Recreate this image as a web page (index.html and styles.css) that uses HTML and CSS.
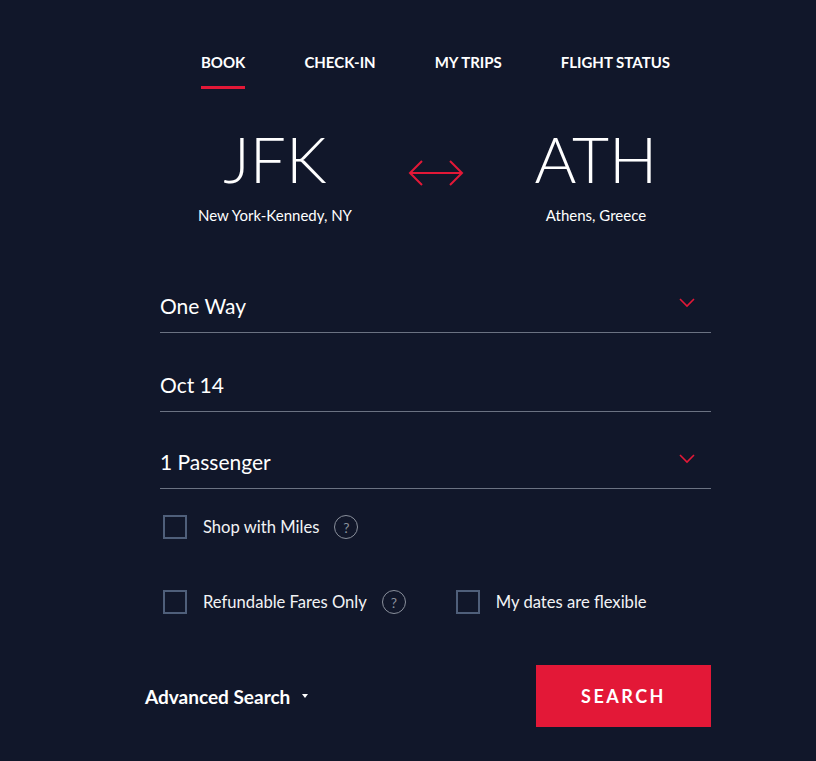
FILE: index.html
```html
<!DOCTYPE html>
<html>
<head>
<meta charset="utf-8">
<link rel="stylesheet" href="styles.css">
</head>
<body>
<div class="page">
  <nav class="tabs">
    <a class="tab active">BOOK</a>
    <a class="tab">CHECK-IN</a>
    <a class="tab">MY TRIPS</a>
    <a class="tab">FLIGHT STATUS</a>
  </nav>

  <div class="route">
    <div class="airport">
      <div class="code">JFK</div>
      <div class="city">New York-Kennedy, NY</div>
    </div>
    <div class="swap">
      <svg width="56" height="28" viewBox="0 0 56 28"><path d="M2 14 H54 M14 2 L2 14 L14 26 M42 2 L54 14 L42 26" fill="none" stroke="#e31837" stroke-width="2"/></svg>
    </div>
    <div class="airport">
      <div class="code">ATH</div>
      <div class="city">Athens, Greece</div>
    </div>
  </div>

  <div class="field f1">
    <span>One Way</span>
    <svg class="chev" width="16" height="10" viewBox="0 0 16 10"><path d="M1 1 L8 8 L15 1" fill="none" stroke="#e31837" stroke-width="1.6"/></svg>
  </div>
  <div class="field f2">
    <span>Oct 14</span>
  </div>
  <div class="field f3">
    <span>1 Passenger</span>
    <svg class="chev" width="16" height="10" viewBox="0 0 16 10"><path d="M1 1 L8 8 L15 1" fill="none" stroke="#e31837" stroke-width="1.6"/></svg>
  </div>

  <div class="checks r1">
    <label class="check"><span class="box"></span><span class="lbl">Shop with Miles</span><span class="help">?</span></label>
  </div>
  <div class="checks r2">
    <label class="check"><span class="box"></span><span class="lbl">Refundable Fares Only</span><span class="help">?</span></label>
    <label class="check"><span class="box"></span><span class="lbl">My dates are flexible</span></label>
  </div>

  <div class="actions">
    <a class="advanced">Advanced Search <span class="tri"></span></a>
    <button class="search">SEARCH</button>
  </div>
</div>
</body>
</html>
```

FILE: styles.css
```css
html, body {
  margin: 0;
  padding: 0;
  background: #11172a;
  height: 100%;
}
body {
  font-family: Lato, "Open Sans", sans-serif;
  color: #ffffff;
}
.page {
  width: 551px;
  margin-left: 160px;
}
.tabs {
  display: flex;
  justify-content: center;
  gap: 59px;
  padding-top: 52px;
}
.tab {
  font-weight: 700;
  font-size: 15px;
  line-height: 20px;
  padding-bottom: 14px;
  border-bottom: 3px solid transparent;
  color: #fff;
}
.tab.active {
  border-bottom-color: #e31837;
}
.route {
  display: grid;
  grid-template-columns: 230px 1fr 230px;
  margin-top: 32px;
}
.airport {
  text-align: center;
}
.code {
  font-size: 64px;
  font-weight: 300;
  line-height: 76px;
}
.city {
  font-size: 15px;
  font-weight: 400;
  line-height: 18px;
  margin-top: 9px;
}
.swap {
  display: flex;
  justify-content: center;
  padding-top: 38px;
}
.field {
  height: 46px;
  border-bottom: 1px solid #6b7282;
  display: flex;
  align-items: center;
  justify-content: space-between;
  padding-bottom: 4px;
  font-size: 21px;
  font-weight: 400;
}
.field.f1 { margin-top: 58px; }
.field.f2 { margin-top: 28px; }
.field.f3 { margin-top: 26px; }
.chev {
  margin-right: 16px;
  margin-bottom: 4px;
}
.checks {
  display: flex;
  gap: 50px;
  padding-left: 3px;
}
.checks.r1 { margin-top: 26px; }
.checks.r2 { margin-top: 51px; }
.check {
  display: flex;
  align-items: center;
}
.box {
  width: 20px;
  height: 20px;
  border: 2px solid #4f5f7a;
}
.lbl {
  font-size: 16.6px;
  margin-left: 16px;
  color: #f2f3f5;
}
.help {
  width: 22px;
  height: 22px;
  border: 1px solid #8a909c;
  border-radius: 50%;
  margin-left: 15px;
  color: #8a909c;
  font-size: 14px;
  display: flex;
  align-items: center;
  justify-content: center;
}
.actions {
  display: flex;
  justify-content: space-between;
  align-items: center;
  margin-top: 51px;
  margin-left: -15px;
}
.advanced {
  font-size: 19px;
  font-weight: 700;
  display: flex;
  align-items: center;
}
.tri {
  width: 0;
  height: 0;
  border-left: 3px solid transparent;
  border-right: 3px solid transparent;
  border-top: 4px solid #fff;
  margin-left: 12px;
}
.search {
  width: 175px;
  height: 62px;
  background: #e31837;
  border: none;
  color: #fff;
  font-family: Lato, sans-serif;
  font-weight: 700;
  font-size: 18px;
  letter-spacing: 2.5px;
}
```
